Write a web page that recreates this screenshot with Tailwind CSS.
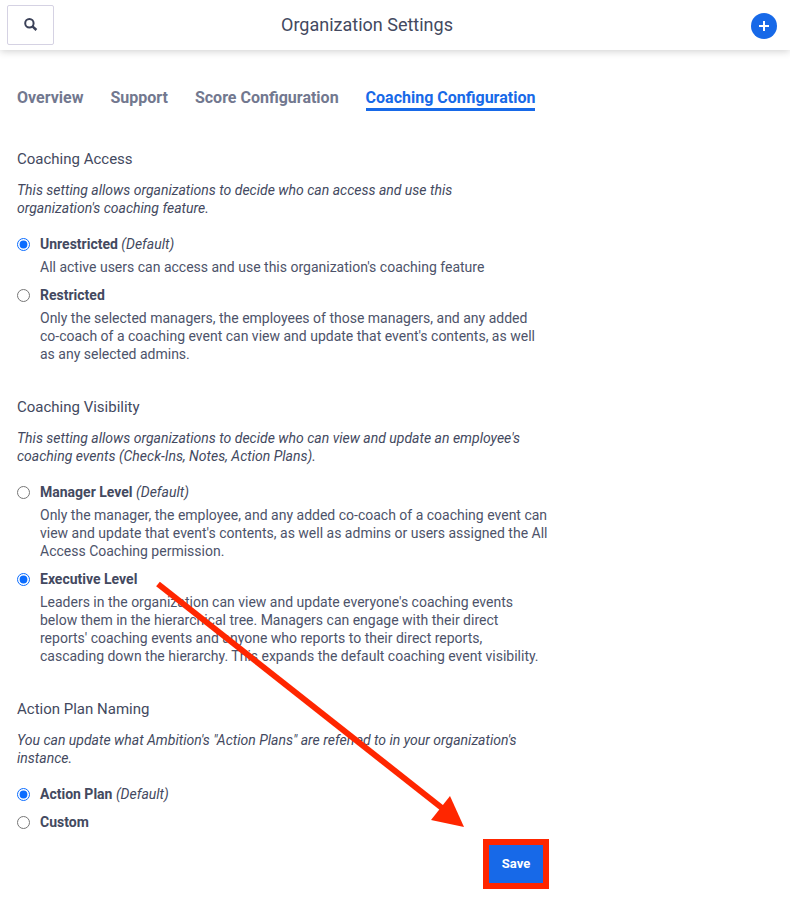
<!DOCTYPE html>
<html lang="en">
<head>
  <meta charset="UTF-8">
  <meta name="viewport" content="width=device-width, initial-scale=1.0">
  <title>Organization Settings</title>
  <script src="https://cdn.jsdelivr.net/npm/@tailwindcss/browser@4"></script>
</head>
<body class="relative min-h-screen bg-white font-['Roboto',sans-serif] text-sm leading-[18px] text-[#434960]">

  <!-- Top bar -->
  <header class="grid grid-cols-[1fr_auto_1fr] items-center h-[50px] pl-[7px] pr-[13px] shadow-[0_1px_8px_rgba(0,0,0,0.2)]">
    <button type="button" aria-label="Search" class="flex items-center justify-center w-[47px] h-10 border border-[#d5d2e3] rounded-xs text-[#3b4158]">
      <svg class="size-[14px]" viewBox="0 0 14 14" fill="none" stroke="currentColor">
        <circle cx="5.4" cy="5.2" r="4.2" stroke-width="2" />
        <path d="M8.5 8.3L12.4 12" stroke-width="2.5" />
      </svg>
    </button>
    <h1 class="mr-[50px] text-[18px] leading-6">Organization Settings</h1>
    <button type="button" aria-label="Add" class="flex items-center justify-center justify-self-end mt-[2px] size-[26px] rounded-full bg-[#1769e8] text-white">
      <svg class="size-[10px]" viewBox="0 0 10 10" stroke="currentColor" stroke-width="2">
        <path d="M5 0V10M0 5H10" />
      </svg>
    </button>
  </header>

  <!-- Tabs -->
  <nav class="flex gap-[27px] mt-[37px] px-[17px] text-base leading-[21px] font-bold whitespace-nowrap text-[#72788f]">
    <a href="#">Overview</a>
    <a href="#">Support</a>
    <a href="#">Score Configuration</a>
    <a href="#" class="border-b-3 border-[#1769e8] text-[#1769e8]">Coaching Configuration</a>
  </nav>

  <form class="w-full max-w-[566px] px-[17px] pt-[38px] pb-3">
    <!-- Coaching Access -->
    <section>
      <h2 class="text-[15px] leading-5">Coaching Access</h2>
      <p class="mt-3 italic">This setting allows organizations to decide who can access and use this<br>organization's coaching feature.</p>
      <div class="flex items-center gap-[10px] mt-[18px]">
        <input type="radio" name="access" id="unrestricted" class="size-[13px] accent-[#0a6cff]" checked>
        <label for="unrestricted"><b>Unrestricted</b> <i>(Default)</i></label>
      </div>
      <p class="mt-[5px] pl-[23px] text-[#4d536a]">All active users can access and use this organization's coaching feature</p>
      <div class="flex items-center gap-[10px] mt-[10px]">
        <input type="radio" name="access" id="restricted" class="size-[13px]">
        <label for="restricted"><b>Restricted</b></label>
      </div>
      <p class="mt-[5px] pl-[23px] text-[#4d536a]">Only the selected managers, the employees of those managers, and any added<br>co-coach of a coaching event can view and update that event's contents, as well<br>as any selected admins.</p>
    </section>

    <!-- Coaching Visibility -->
    <section class="mt-[34px]">
      <h2 class="text-[15px] leading-5">Coaching Visibility</h2>
      <p class="mt-3 italic">This setting allows organizations to decide who can view and update an employee's<br>coaching events (Check-Ins, Notes, Action Plans).</p>
      <div class="flex items-center gap-[10px] mt-[18px]">
        <input type="radio" name="visibility" id="manager" class="size-[13px]">
        <label for="manager"><b>Manager Level</b> <i>(Default)</i></label>
      </div>
      <p class="mt-[5px] pl-[23px] text-[#4d536a]">Only the manager, the employee, and any added co-coach of a coaching event can<br>view and update that event's contents, as well as admins or users assigned the All<br>Access Coaching permission.</p>
      <div class="flex items-center gap-[10px] mt-[10px]">
        <input type="radio" name="visibility" id="executive" class="size-[13px] accent-[#0a6cff]" checked>
        <label for="executive"><b>Executive Level</b></label>
      </div>
      <p class="mt-[5px] pl-[23px] text-[#4d536a]">Leaders in the organization can view and update everyone's coaching events<br>below them in the hierarchical tree. Managers can engage with their direct<br>reports' coaching events and anyone who reports to their direct reports,<br>cascading down the hierarchy. This expands the default coaching event visibility.</p>
    </section>

    <!-- Action Plan Naming -->
    <section class="mt-[34px]">
      <h2 class="text-[15px] leading-5">Action Plan Naming</h2>
      <p class="mt-3 italic">You can update what Ambition's "Action Plans" are referred to in your organization's<br>instance.</p>
      <div class="flex items-center gap-[10px] mt-[18px]">
        <input type="radio" name="naming" id="action-plan" class="size-[13px] accent-[#0a6cff]" checked>
        <label for="action-plan"><b>Action Plan</b> <i>(Default)</i></label>
      </div>
      <div class="flex items-center gap-[10px] mt-[10px]">
        <input type="radio" name="naming" id="custom" class="size-[13px]">
        <label for="custom"><b>Custom</b></label>
      </div>
    </section>

    <div class="flex justify-end mt-2">
      <button type="submit" class="w-[66px] h-[50px] border-6 border-[#ff2600] bg-[#1769e8] text-[13px] font-bold text-white">Save</button>
    </div>
  </form>

  <!-- Arrow pointing at the save button -->
  <svg class="absolute left-[150px] top-[576px] w-[320px] h-[256px] pointer-events-none" viewBox="0 0 320 256" aria-hidden="true">
    <path d="M8 8L292 232" stroke="#ff2600" stroke-width="6" />
    <path d="M314 251L300 220L281 244Z" fill="#ff2600" />
  </svg>
</body>
</html>
